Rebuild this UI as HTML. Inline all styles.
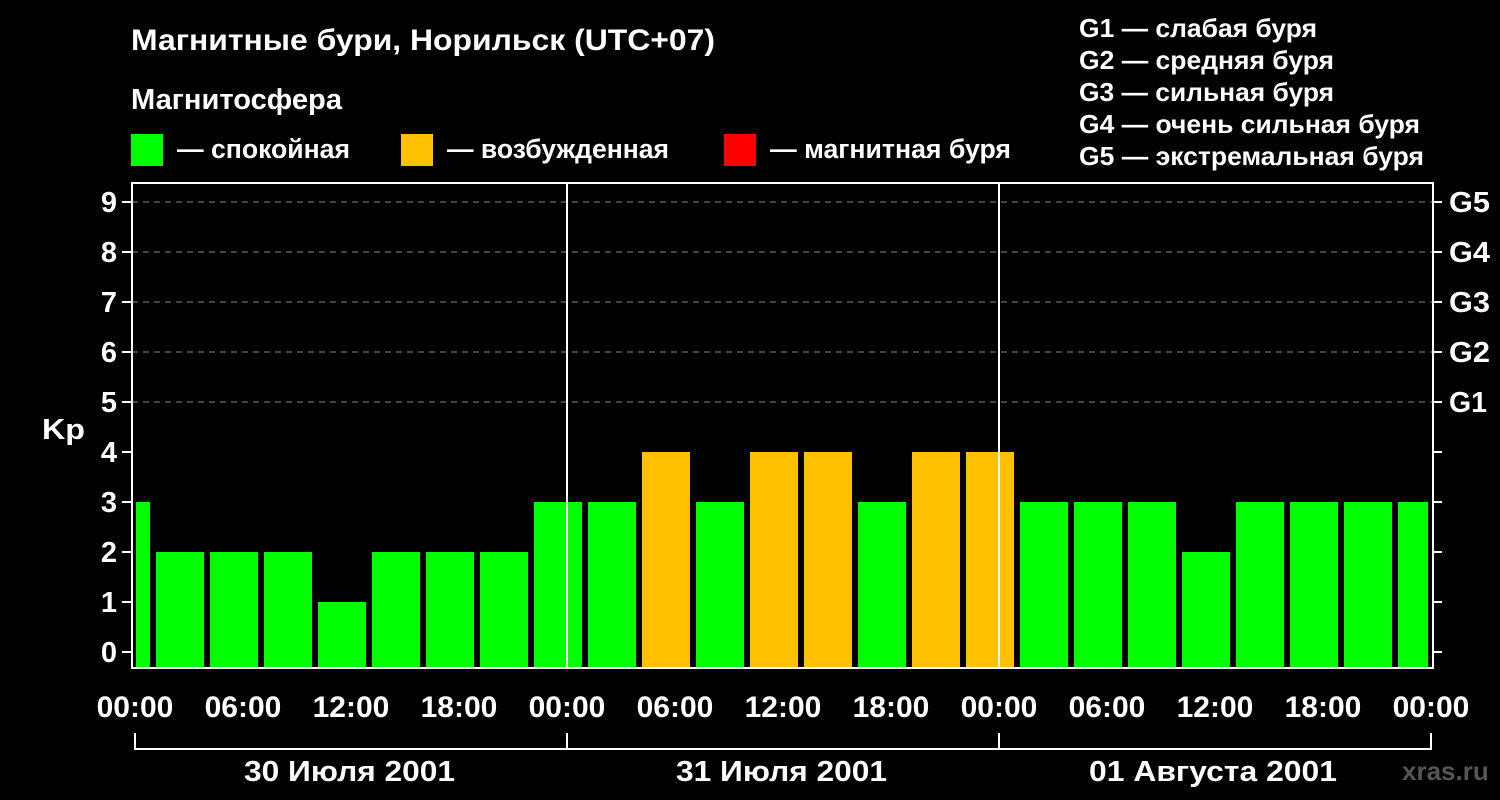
<!DOCTYPE html>
<html><head><meta charset="utf-8"><style>
html,body{margin:0;padding:0;background:#000;width:1500px;height:800px;overflow:hidden}
svg{display:block}
text{font-family:"Liberation Sans",sans-serif;font-weight:bold;fill:#fff}
</style></head><body>
<svg width="1500" height="800" viewBox="0 0 1500 800">
<rect width="1500" height="800" fill="#000"/>
<text x="131" y="50" font-size="30" textLength="584" lengthAdjust="spacingAndGlyphs">Магнитные бури, Норильск (UTC+07)</text>
<text x="131" y="109" font-size="29" textLength="211" lengthAdjust="spacingAndGlyphs">Магнитосфера</text>
<rect x="131" y="134" width="32" height="32" fill="#00ff00"/>
<text x="177" y="158" font-size="27" textLength="173" lengthAdjust="spacingAndGlyphs">— спокойная</text>
<rect x="401" y="134" width="32" height="32" fill="#ffc000"/>
<text x="447" y="158" font-size="27" textLength="222" lengthAdjust="spacingAndGlyphs">— возбужденная</text>
<rect x="724" y="134" width="32" height="32" fill="#ff0000"/>
<text x="770" y="158" font-size="27" textLength="241" lengthAdjust="spacingAndGlyphs">— магнитная буря</text>
<g font-size="26">
<text x="1079" y="37" textLength="238" lengthAdjust="spacingAndGlyphs">G1 — слабая буря</text>
<text x="1079" y="69" textLength="255" lengthAdjust="spacingAndGlyphs">G2 — средняя буря</text>
<text x="1079" y="101" textLength="255" lengthAdjust="spacingAndGlyphs">G3 — сильная буря</text>
<text x="1079" y="133" textLength="341" lengthAdjust="spacingAndGlyphs">G4 — очень сильная буря</text>
<text x="1079" y="165" textLength="345" lengthAdjust="spacingAndGlyphs">G5 — экстремальная буря</text>
</g>
<g stroke="#888" stroke-width="1" stroke-dasharray="6,5">
<line x1="132" y1="202" x2="1433" y2="202"/><line x1="132" y1="252" x2="1433" y2="252"/>
<line x1="132" y1="302" x2="1433" y2="302"/><line x1="132" y1="352" x2="1433" y2="352"/>
<line x1="132" y1="402" x2="1433" y2="402"/>
</g>
<g>
<rect x="136" y="502" width="14" height="166" fill="#00ff00"/>
<rect x="156" y="552" width="48" height="116" fill="#00ff00"/>
<rect x="210" y="552" width="48" height="116" fill="#00ff00"/>
<rect x="264" y="552" width="48" height="116" fill="#00ff00"/>
<rect x="318" y="602" width="48" height="66" fill="#00ff00"/>
<rect x="372" y="552" width="48" height="116" fill="#00ff00"/>
<rect x="426" y="552" width="48" height="116" fill="#00ff00"/>
<rect x="480" y="552" width="48" height="116" fill="#00ff00"/>
<rect x="534" y="502" width="48" height="166" fill="#00ff00"/>
<rect x="588" y="502" width="48" height="166" fill="#00ff00"/>
<rect x="642" y="452" width="48" height="216" fill="#ffc000"/>
<rect x="696" y="502" width="48" height="166" fill="#00ff00"/>
<rect x="750" y="452" width="48" height="216" fill="#ffc000"/>
<rect x="804" y="452" width="48" height="216" fill="#ffc000"/>
<rect x="858" y="502" width="48" height="166" fill="#00ff00"/>
<rect x="912" y="452" width="48" height="216" fill="#ffc000"/>
<rect x="966" y="452" width="48" height="216" fill="#ffc000"/>
<rect x="1020" y="502" width="48" height="166" fill="#00ff00"/>
<rect x="1074" y="502" width="48" height="166" fill="#00ff00"/>
<rect x="1128" y="502" width="48" height="166" fill="#00ff00"/>
<rect x="1182" y="552" width="48" height="116" fill="#00ff00"/>
<rect x="1236" y="502" width="48" height="166" fill="#00ff00"/>
<rect x="1290" y="502" width="48" height="166" fill="#00ff00"/>
<rect x="1344" y="502" width="48" height="166" fill="#00ff00"/>
<rect x="1398" y="502" width="30" height="166" fill="#00ff00"/>
</g>
<g stroke="#fff" stroke-width="2" fill="none">
<line x1="567" y1="182" x2="567" y2="668"/>
<line x1="999" y1="182" x2="999" y2="668"/>
<polyline points="132,668 132,183 1433,183 1433,669"/>
<line x1="131" y1="668" x2="1434" y2="668"/>
<line x1="122" y1="202" x2="131" y2="202"/><line x1="122" y1="252" x2="131" y2="252"/>
<line x1="122" y1="302" x2="131" y2="302"/><line x1="122" y1="352" x2="131" y2="352"/>
<line x1="122" y1="402" x2="131" y2="402"/><line x1="122" y1="452" x2="131" y2="452"/>
<line x1="122" y1="502" x2="131" y2="502"/><line x1="122" y1="552" x2="131" y2="552"/>
<line x1="122" y1="602" x2="131" y2="602"/><line x1="122" y1="652" x2="131" y2="652"/>
<line x1="1434" y1="202" x2="1442" y2="202"/><line x1="1434" y1="252" x2="1442" y2="252"/>
<line x1="1434" y1="302" x2="1442" y2="302"/><line x1="1434" y1="352" x2="1442" y2="352"/>
<line x1="1434" y1="402" x2="1442" y2="402"/><line x1="1434" y1="452" x2="1442" y2="452"/>
<line x1="1434" y1="502" x2="1442" y2="502"/><line x1="1434" y1="552" x2="1442" y2="552"/>
<line x1="1434" y1="602" x2="1442" y2="602"/><line x1="1434" y1="652" x2="1442" y2="652"/>
<polyline points="135,733 135,749 1431,749 1431,733"/>
<line x1="567" y1="733" x2="567" y2="749"/><line x1="999" y1="733" x2="999" y2="749"/>
</g>
<g stroke="#fff" stroke-width="2" id="xt"></g>
<script>
var g=document.getElementById('xt'),s='';
for(var i=0;i<=24;i++){var x=135+54*i;var len=(i%2==0)?17:9;s+='<line x1="'+x+'" y1="669" x2="'+x+'" y2="'+(669+len)+'"/>';}
g.innerHTML=s;
</script>
<g font-size="29" text-anchor="end">
<text x="117" y="212">9</text><text x="117" y="262">8</text><text x="117" y="312">7</text>
<text x="117" y="362">6</text><text x="117" y="412">5</text><text x="117" y="462">4</text>
<text x="117" y="512">3</text><text x="117" y="562">2</text><text x="117" y="612">1</text>
<text x="117" y="662">0</text>
</g>
<text x="42" y="439" font-size="29" textLength="43" lengthAdjust="spacingAndGlyphs">Kp</text>
<g font-size="29">
<text x="1449" y="212" textLength="41" lengthAdjust="spacingAndGlyphs">G5</text>
<text x="1449" y="262" textLength="41" lengthAdjust="spacingAndGlyphs">G4</text>
<text x="1449" y="312" textLength="41" lengthAdjust="spacingAndGlyphs">G3</text>
<text x="1449" y="362" textLength="41" lengthAdjust="spacingAndGlyphs">G2</text>
<text x="1449" y="412" textLength="38" lengthAdjust="spacingAndGlyphs">G1</text>
</g>
<g font-size="30" text-anchor="middle">
<text x="135" y="717">00:00</text><text x="243" y="717">06:00</text><text x="351" y="717">12:00</text><text x="459" y="717">18:00</text>
<text x="567" y="717">00:00</text><text x="675" y="717">06:00</text><text x="783" y="717">12:00</text><text x="891" y="717">18:00</text>
<text x="999" y="717">00:00</text><text x="1107" y="717">06:00</text><text x="1215" y="717">12:00</text><text x="1323" y="717">18:00</text>
<text x="1431" y="717">00:00</text>
</g>
<g font-size="29">
<text x="244" y="781" textLength="211" lengthAdjust="spacingAndGlyphs">30 Июля 2001</text>
<text x="676" y="781" textLength="211" lengthAdjust="spacingAndGlyphs">31 Июля 2001</text>
<text x="1089" y="781" textLength="248" lengthAdjust="spacingAndGlyphs">01 Августа 2001</text>
</g>
<text x="1402" y="780" font-size="26" style="fill:#555">xras.ru</text>
</svg>
</body></html>
